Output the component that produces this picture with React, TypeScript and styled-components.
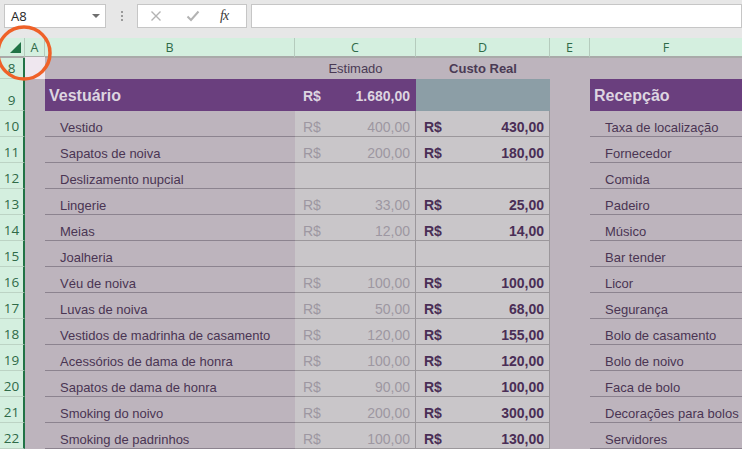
import React from "react";
import styled, { createGlobalStyle } from "styled-components";

const GlobalStyle = createGlobalStyle`
  html, body {
    margin: 0;
    padding: 0;
    overflow: hidden;
    background: #bdb4bd;
  }
  * { box-sizing: border-box; }
`;

type Item = { label: string; est?: string; real?: string; side: string };

const items: Item[] = [
  { label: "Vestido", est: "400,00", real: "430,00", side: "Taxa de localização" },
  { label: "Sapatos de noiva", est: "200,00", real: "180,00", side: "Fornecedor" },
  { label: "Deslizamento nupcial", side: "Comida" },
  { label: "Lingerie", est: "33,00", real: "25,00", side: "Padeiro" },
  { label: "Meias", est: "12,00", real: "14,00", side: "Músico" },
  { label: "Joalheria", side: "Bar tender" },
  { label: "Véu de noiva", est: "100,00", real: "100,00", side: "Licor" },
  { label: "Luvas de noiva", est: "50,00", real: "68,00", side: "Segurança" },
  { label: "Vestidos de madrinha de casamento", est: "120,00", real: "155,00", side: "Bolo de casamento" },
  { label: "Acessórios de dama de honra", est: "100,00", real: "120,00", side: "Bolo de noivo" },
  { label: "Sapatos de dama de honra", est: "90,00", real: "100,00", side: "Faca de bolo" },
  { label: "Smoking do noivo", est: "200,00", real: "300,00", side: "Decorações para bolos" },
  { label: "Smoking de padrinhos", est: "100,00", real: "130,00", side: "Servidores" },
];

const Page = styled.div`
  width: 742px;
  height: 449px;
  overflow: hidden;
  position: relative;
  display: flex;
  flex-direction: column;
  font-family: "Liberation Sans", Arial, sans-serif;
`;

const TopBar = styled.div`
  height: 38px;
  flex: none;
  background: #e7e7e7;
  display: flex;
  align-items: flex-start;
  padding: 4px 0 0 4px;
`;

const Box = styled.div<{ $w?: number }>`
  height: 24px;
  width: ${(p) => (p.$w ? `${p.$w}px` : "auto")};
  flex: ${(p) => (p.$w ? "none" : "1")};
  background: #fff;
  border: 1px solid #c6c6c6;
  display: flex;
  align-items: center;
`;

const NameText = styled.span`
  font-family: "Open Sans", "Noto Sans", sans-serif;
  font-size: 13px;
  color: #262626;
  padding-left: 6px;
  flex: 1;
`;

const Caret = styled.span`
  width: 0;
  height: 0;
  border-left: 4px solid transparent;
  border-right: 4px solid transparent;
  border-top: 4px solid #6f6f6f;
  margin-right: 5px;
`;

const Dots = styled.div`
  width: 31px;
  height: 24px;
  display: flex;
  flex-direction: column;
  align-items: center;
  justify-content: center;
  gap: 2px;
  span {
    width: 2px;
    height: 2px;
    background: #9a9a9a;
  }
`;

const FxBox = styled(Box)`
  padding-left: 12px;
  margin-right: 4px;
  gap: 0;
`;

const IconSlot = styled.span<{ $w: number }>`
  width: ${(p) => p.$w}px;
  display: flex;
  align-items: center;
`;

const FxLabel = styled.span`
  font-family: "Liberation Serif", "DejaVu Serif", serif;
  font-style: italic;
  font-size: 14px;
  color: #3a3a3a;
  letter-spacing: -1px;
`;

const cols = "25px 20px 250px 121px 134px 40px 1fr";

const SheetRow = styled.div<{ $h: number }>`
  display: grid;
  grid-template-columns: ${cols};
  height: ${(p) => p.$h}px;
  flex: none;
`;

const ColHead = styled.div<{ $last?: boolean }>`
  background: #d4efdf;
  border-bottom: 2px solid #a9aaa9;
  border-right: ${(p) => (p.$last ? "none" : "1px solid #b5cbbd")};
  display: flex;
  align-items: center;
  justify-content: center;
  font-family: "Open Sans", "Noto Sans", sans-serif;
  font-size: 12.5px;
  color: #2f6a48;
  padding-top: 1px;
`;

const Corner = styled(ColHead)`
  position: relative;
  &::after {
    content: "";
    position: absolute;
    right: 3px;
    bottom: 3px;
    border-left: 11px solid transparent;
    border-bottom: 11px solid #217346;
  }
`;

const RowHead = styled.div`
  background: #d4efdf;
  border-right: 2px solid #217346;
  border-bottom: 1px solid #bcd3c4;
  display: flex;
  align-items: flex-end;
  justify-content: center;
  padding-bottom: 1px;
  font-family: "Open Sans", "Noto Sans", sans-serif;
  font-size: 13.5px;
  color: #2f6a48;
`;

const Blank = styled.div<{ $bg?: string }>`
  background: ${(p) => p.$bg ?? "transparent"};
`;

const Label = styled.div<{ $bold?: boolean }>`
  display: flex;
  align-items: flex-end;
  justify-content: center;
  padding-bottom: 3px;
  font-size: 13px;
  font-weight: ${(p) => (p.$bold ? 700 : 400)};
  color: #4a3a54;
`;

const Band = styled.div<{ $bg?: string }>`
  background: ${(p) => p.$bg ?? "#6a3f7e"};
  color: #ddd5e0;
  font-weight: 700;
  font-size: 16px;
  display: flex;
  align-items: center;
  padding: 2px 4px 0;
`;

const BandMoney = styled(Band)`
  font-size: 14px;
  justify-content: space-between;
  padding: 2px 6px 0 8px;
`;

const ItemCell = styled.div`
  border-bottom: 1px solid #8c838f;
  display: flex;
  align-items: flex-end;
  padding: 0 0 1px 15px;
  font-size: 13px;
  color: #4a3553;
  white-space: nowrap;
  overflow: hidden;
`;

const MoneyCell = styled.div<{ $real?: boolean }>`
  background: #c9c6c9;
  border-bottom: 1px solid #9b979b;
  border-right: 1px solid #9b979b;
  display: flex;
  align-items: flex-end;
  justify-content: space-between;
  padding: 0 5px 1px 8px;
  font-size: 14px;
  font-weight: ${(p) => (p.$real ? 700 : 400)};
  color: ${(p) => (p.$real ? "#4a2e56" : "#9d97a1")};
`;

const Ring = styled.svg`
  position: absolute;
  left: -8px;
  top: 21px;
  pointer-events: none;
`;

function Money({ value, real }: { value?: string; real?: boolean }) {
  return (
    <MoneyCell $real={real}>
      {value && (
        <>
          <span>R$</span>
          <span>{value}</span>
        </>
      )}
    </MoneyCell>
  );
}

export default function App() {
  const letters = ["A", "B", "C", "D", "E", "F"];
  return (
    <Page>
      <GlobalStyle />
      <TopBar>
        <Box $w={102}>
          <NameText>A8</NameText>
          <Caret />
        </Box>
        <Dots>
          <span />
          <span />
          <span />
        </Dots>
        <FxBox $w={110}>
          <IconSlot $w={36}>
            <svg width="12" height="12" viewBox="0 0 12 12">
              <path d="M1.5 1.5 L10.5 10.5 M10.5 1.5 L1.5 10.5" stroke="#b3b3b3" strokeWidth="1.4" />
            </svg>
          </IconSlot>
          <IconSlot $w={34}>
            <svg width="14" height="12" viewBox="0 0 14 12">
              <path d="M1.5 6.5 L5 10 L12.5 1.5" stroke="#b3b3b3" strokeWidth="2" fill="none" />
            </svg>
          </IconSlot>
          <FxLabel>fx</FxLabel>
        </FxBox>
        <Box />
      </TopBar>

      <SheetRow $h={19}>
        <Corner />
        {letters.map((l, i) => (
          <ColHead key={l} $last={i === letters.length - 1}>
            {l}
          </ColHead>
        ))}
      </SheetRow>

      <SheetRow $h={22}>
        <RowHead>8</RowHead>
        <Blank $bg="#efe7ef" />
        <Blank />
        <Label>Estimado</Label>
        <Label $bold>Custo Real</Label>
        <Blank />
        <Blank />
      </SheetRow>

      <SheetRow $h={32}>
        <RowHead>9</RowHead>
        <Blank />
        <Band>Vestuário</Band>
        <BandMoney>
          <span>R$</span>
          <span>1.680,00</span>
        </BandMoney>
        <Band $bg="#8c9ea6" />
        <Blank />
        <Band>Recepção</Band>
      </SheetRow>

      {items.map((it, i) => (
        <SheetRow $h={26} key={it.label}>
          <RowHead>{10 + i}</RowHead>
          <Blank />
          <ItemCell>{it.label}</ItemCell>
          <Money value={it.est} />
          <Money value={it.real} real />
          <Blank />
          <ItemCell>{it.side}</ItemCell>
        </SheetRow>
      ))}

      <Ring width="64" height="64" viewBox="0 0 64 64">
        <circle cx="32" cy="32" r="26" fill="none" stroke="#ef6128" strokeWidth="3.5" />
      </Ring>
    </Page>
  );
}
